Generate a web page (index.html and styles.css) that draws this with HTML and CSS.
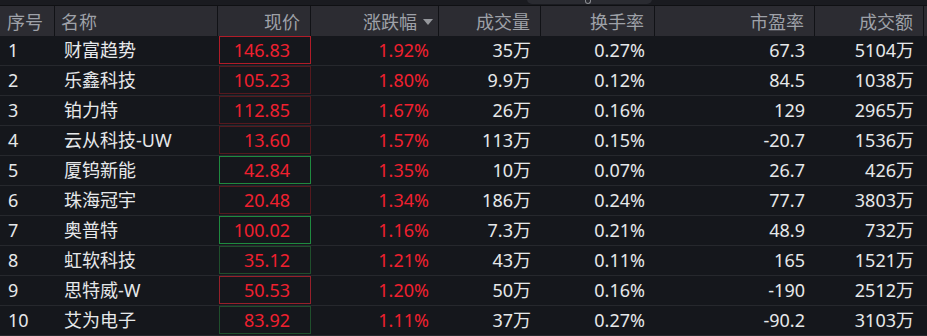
FILE: index.html
```html
<!DOCTYPE html>
<html lang="zh-CN">
<head>
<meta charset="utf-8">
<title>行情列表</title>
<link rel="stylesheet" href="styles.css">
</head>
<body>
<div class="screen">
  <div class="topstrip"><div class="tab"><span class="chev"></span></div></div>
  <div class="grid head">
    <div class="c left">序号</div>
    <div class="c left name">名称</div>
    <div class="c">现价</div>
    <div class="c sort">涨跌幅<span class="tri"></span></div>
    <div class="c">成交量</div>
    <div class="c">换手率</div>
    <div class="c">市盈率</div>
    <div class="c">成交额</div>
    <div class="c rest"></div>
  </div>
  <div class="body">
    <div class="grid row"><div class="c left">1</div><div class="c left name">财富趋势</div><div class="c pc"><span class="box up-hi">146.83</span></div><div class="c red">1.92%</div><div class="c">35万</div><div class="c">0.27%</div><div class="c">67.3</div><div class="c">5104万</div><div class="c rest"></div></div>
    <div class="grid row"><div class="c left">2</div><div class="c left name">乐鑫科技</div><div class="c pc"><span class="box up-lo">105.23</span></div><div class="c red">1.80%</div><div class="c">9.9万</div><div class="c">0.12%</div><div class="c">84.5</div><div class="c">1038万</div><div class="c rest"></div></div>
    <div class="grid row"><div class="c left">3</div><div class="c left name">铂力特</div><div class="c pc"><span class="box up-lo">112.85</span></div><div class="c red">1.67%</div><div class="c">26万</div><div class="c">0.16%</div><div class="c">129</div><div class="c">2965万</div><div class="c rest"></div></div>
    <div class="grid row"><div class="c left">4</div><div class="c left name">云从科技-UW</div><div class="c pc"><span class="box up-lo">13.60</span></div><div class="c red">1.57%</div><div class="c">113万</div><div class="c">0.15%</div><div class="c">-20.7</div><div class="c">1536万</div><div class="c rest"></div></div>
    <div class="grid row"><div class="c left">5</div><div class="c left name">厦钨新能</div><div class="c pc"><span class="box dn-hi">42.84</span></div><div class="c red">1.35%</div><div class="c">10万</div><div class="c">0.07%</div><div class="c">26.7</div><div class="c">426万</div><div class="c rest"></div></div>
    <div class="grid row"><div class="c left">6</div><div class="c left name">珠海冠宇</div><div class="c pc"><span class="box up-lo">20.48</span></div><div class="c red">1.34%</div><div class="c">186万</div><div class="c">0.24%</div><div class="c">77.7</div><div class="c">3803万</div><div class="c rest"></div></div>
    <div class="grid row"><div class="c left">7</div><div class="c left name">奥普特</div><div class="c pc"><span class="box dn-hi">100.02</span></div><div class="c red">1.16%</div><div class="c">7.3万</div><div class="c">0.21%</div><div class="c">48.9</div><div class="c">732万</div><div class="c rest"></div></div>
    <div class="grid row"><div class="c left">8</div><div class="c left name">虹软科技</div><div class="c pc"><span class="box dn-lo">35.12</span></div><div class="c red">1.21%</div><div class="c">43万</div><div class="c">0.11%</div><div class="c">165</div><div class="c">1521万</div><div class="c rest"></div></div>
    <div class="grid row"><div class="c left">9</div><div class="c left name">思特威-W</div><div class="c pc"><span class="box up-mid">50.53</span></div><div class="c red">1.20%</div><div class="c">50万</div><div class="c">0.16%</div><div class="c">-190</div><div class="c">2512万</div><div class="c rest"></div></div>
    <div class="grid row"><div class="c left">10</div><div class="c left name">艾为电子</div><div class="c pc"><span class="box dn-lo">83.92</span></div><div class="c red">1.11%</div><div class="c">37万</div><div class="c">0.27%</div><div class="c">-90.2</div><div class="c">3103万</div><div class="c rest"></div></div>
  </div>
</div>
</body>
</html>
```
FILE: styles.css
```css
html, body {
  margin: 0;
  padding: 0;
  background: #15171c;
}
.screen {
  width: 927px;
  height: 336px;
  overflow: hidden;
  position: relative;
  font-family: "Noto Sans", "Noto Sans CJK SC", sans-serif;
  font-size: 18px;
  color: #e6e8ea;
}
.topstrip {
  height: 5px;
  background: #1a1b20;
  border-bottom: 1px solid #0f1013;
  position: relative;
}
.tab {
  position: absolute;
  left: 527px;
  top: -6px;
  width: 125px;
  height: 10px;
  background: #2a2b31;
  border-radius: 5px;
}
.chev {
  position: absolute;
  left: 58px;
  top: 6px;
  width: 4px;
  height: 3px;
  border: 1px solid #8a8c90;
  border-top: none;
  border-radius: 0 0 3px 3px;
}
.grid {
  display: grid;
  grid-template-columns: 55px 163px 93px 128px 102px 114px 160px 109px 1fr;
}
.c {
  display: flex;
  align-items: center;
  justify-content: flex-end;
  padding-right: 10px;
  white-space: nowrap;
  box-sizing: border-box;
  line-height: 1;
}
.c.left {
  justify-content: flex-start;
  padding-right: 0;
  padding-left: 7px;
}
.head {
  height: 30px;
  background: #2c2c32;
  color: #9ea1a8;
}
.head .c {
  border-right: 1px solid #111216;
  padding-top: 1px;
}
.head .c.rest { border-right: none; }
.head .name { padding-left: 6px; }
.head .sort { padding-right: 5px; }
.tri {
  display: inline-block;
  width: 0;
  height: 0;
  margin-left: 6px;
  border-left: 5px solid transparent;
  border-right: 5px solid transparent;
  border-top: 6px solid #95979c;
}
.row {
  height: 30px;
  border-bottom: 1px solid #26282d;
  box-sizing: border-box;
}
.row .c { padding-bottom: 1px; }
.row .left { padding-left: 8px; }
.row .name { padding-left: 9px; }
.row .pc {
  padding: 0 0 1px 1px;
  align-items: flex-start;
  justify-content: stretch;
}
.box {
  display: flex;
  align-items: center;
  justify-content: flex-end;
  box-sizing: border-box;
  width: 92px;
  height: 28px;
  padding-right: 20px;
  border: 1px solid #5a1a20;
  color: #f0202f;
  line-height: 1;
}
.box.up-hi { border-color: #b11c28; }
.box.up-mid { border-color: #96202a; }
.box.up-lo { border-color: #55191e; }
.box.dn-hi { border-color: #1f8a3f; }
.box.dn-lo { border-color: #1f4f2c; }
.red { color: #f0202f; }
```
